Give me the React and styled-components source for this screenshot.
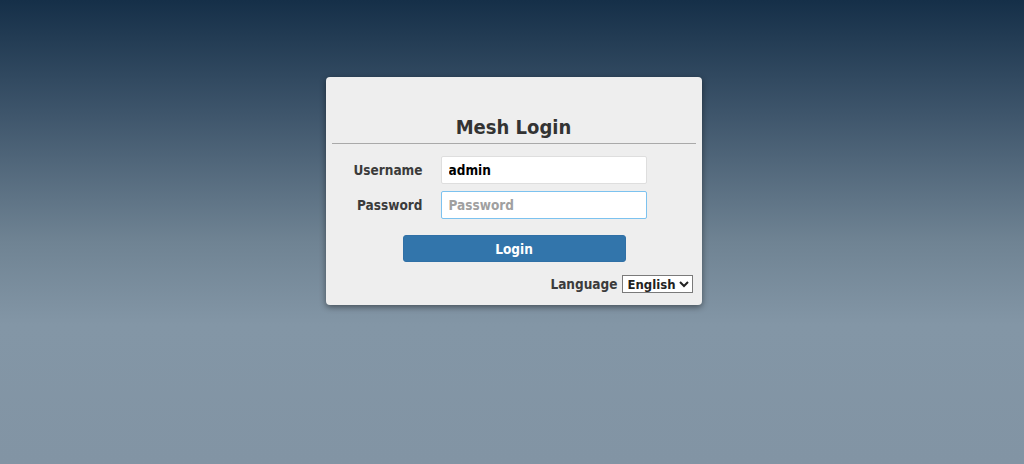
import React from "react";
import styled, { createGlobalStyle } from "styled-components";

const Global = createGlobalStyle`
  html, body { margin: 0; padding: 0; height: 100%; }
  body {
    font-family: "DejaVu Sans Condensed", "DejaVu Sans", Verdana, sans-serif;
    font-stretch: condensed;
  }
  #root { min-height: 100%; }
`;

const Page = styled.div`
  min-height: 464px;
  height: 100vh;
  box-sizing: border-box;
  padding-top: 77px;
  background: linear-gradient(to bottom, #152f48 0%, #3f566c 25%, #6f8393 52%, #8396a6 70%, #8294a4 100%);
  display: flex;
  justify-content: center;
  align-items: flex-start;
`;

const Card = styled.div`
  width: 376px;
  height: 228px;
  box-sizing: border-box;
  margin-left: 3px;
  background: #eeeeee;
  border-radius: 4px;
  box-shadow: 0 2px 6px rgba(0, 0, 0, 0.45);
  padding: 38px 0 0;
  display: flex;
  flex-direction: column;
`;

const Title = styled.h2`
  margin: 0;
  font-size: 20px;
  line-height: 24px;
  font-weight: bold;
  color: #333333;
  text-align: center;
`;

const Rule = styled.hr`
  margin: 4px 6px 0;
  border: 0;
  border-top: 1px solid #a9a9a9;
  height: 0;
`;

const Form = styled.div`
  display: grid;
  grid-template-columns: 80px 206px;
  column-gap: 18px;
  row-gap: 7px;
  padding-left: 17px;
  margin-top: 12px;
  align-items: center;
`;

const Label = styled.label`
  font-size: 13.5px;
  font-weight: bold;
  color: #3b3b3b;
  text-align: right;
`;

const Input = styled.input`
  box-sizing: border-box;
  width: 206px;
  height: 28px;
  padding: 0 7px;
  font-family: inherit;
  font-stretch: condensed;
  font-size: 13.5px;
  font-weight: bold;
  color: #000;
  background: #fff;
  border: 1px solid ${(p) => (p.$focused ? "#7cc2ef" : "#dedede")};
  border-radius: 2px;
  outline: none;
  &::placeholder { color: #a0a0a0; }
`;

const ButtonRow = styled.div`
  display: flex;
  justify-content: center;
  margin-top: 16px;
`;

const Button = styled.button`
  width: 223px;
  height: 27px;
  margin-left: 1px;
  background: #3275ab;
  border: 1px solid #3070a6;
  border-radius: 3px;
  color: #fff;
  font-family: inherit;
  font-stretch: condensed;
  font-size: 13.5px;
  font-weight: bold;
  cursor: pointer;
`;

const LangRow = styled.div`
  display: flex;
  justify-content: flex-end;
  align-items: center;
  gap: 4px;
  margin-top: 13px;
  padding-right: 9px;
`;

const LangLabel = styled.span`
  font-size: 13.5px;
  font-weight: bold;
  color: #3b3b3b;
`;

const Select = styled.select`
  height: 18px;
  box-sizing: border-box;
  padding: 0 0 0 1px;
  font-family: inherit;
  font-stretch: condensed;
  font-size: 13px;
  font-weight: bold;
  color: #222;
  background: #fff;
  border: 1px solid #7a7a7a;
  border-radius: 0;
`;

export default function App() {
  return (
    <>
      <Global />
      <Page>
        <Card>
          <Title>Mesh Login</Title>
          <Rule />
          <Form>
            <Label htmlFor="u">Username</Label>
            <Input id="u" type="text" defaultValue="admin" />
            <Label htmlFor="p">Password</Label>
            <Input id="p" type="password" placeholder="Password" $focused autoFocus />
          </Form>
          <ButtonRow>
            <Button type="button">Login</Button>
          </ButtonRow>
          <LangRow>
            <LangLabel>Language</LangLabel>
            <Select defaultValue="en">
              <option value="en">English</option>
            </Select>
          </LangRow>
        </Card>
      </Page>
    </>
  );
}
